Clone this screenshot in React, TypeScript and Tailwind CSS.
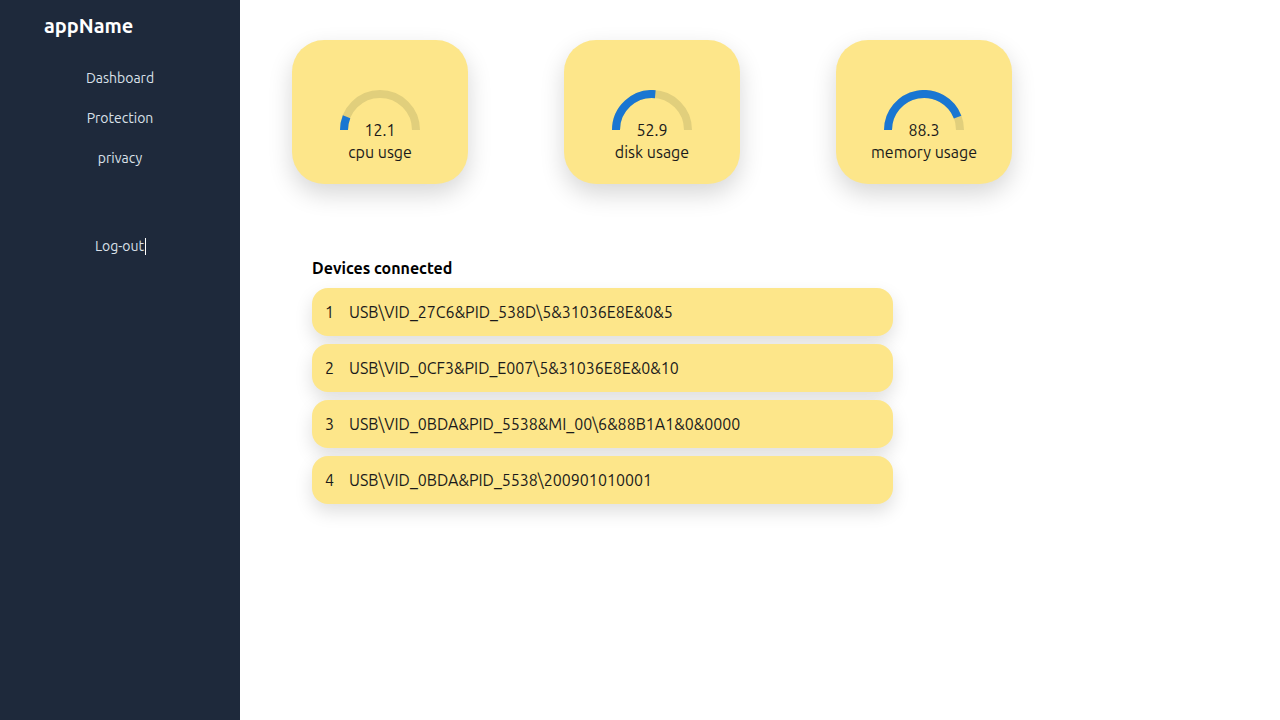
import React from "react";

type GaugeProps = { value: number; label: string };

function Gauge({ value, label }: GaugeProps) {
  const r = 36;
  const cx = 40;
  const cy = 40;
  const angle = Math.PI * (1 - value / 100);
  const ex = cx + r * Math.cos(angle);
  const ey = cy - r * Math.sin(angle);
  const track = `M ${cx - r} ${cy} A ${r} ${r} 0 0 1 ${cx + r} ${cy}`;
  const fill = `M ${cx - r} ${cy} A ${r} ${r} 0 0 1 ${ex.toFixed(3)} ${ey.toFixed(3)}`;
  return (
    <div className="flex h-[144px] w-[176px] flex-col items-center rounded-[32px] bg-[#fde68a] pt-[50px] shadow-[0_10px_24px_rgba(0,0,0,0.16)]">
      <div className="relative h-[40px] w-[80px]">
        <svg width="80" height="40" viewBox="0 0 80 40" className="block">
          <path d={track} fill="none" stroke="#e1cf7c" strokeWidth="8" />
          <path d={fill} fill="none" stroke="#1976d2" strokeWidth="8" />
        </svg>
      </div>
      <div className="-mt-[12px] text-base leading-6 text-[#1a1a1a]">{value}</div>
      <div className="-mt-[2px] text-base leading-6 text-[#1a1a1a]">{label}</div>
    </div>
  );
}

const devices = [
  "USB\\VID_27C6&PID_538D\\5&31036E8E&0&5",
  "USB\\VID_0CF3&PID_E007\\5&31036E8E&0&10",
  "USB\\VID_0BDA&PID_5538&MI_00\\6&88B1A1&0&0000",
  "USB\\VID_0BDA&PID_5538\\200901010001",
];

export default function App() {
  return (
    <div className="flex h-[720px] w-full font-['Ubuntu','Noto_Sans',sans-serif]">
      <aside className="flex h-full w-[240px] shrink-0 flex-col bg-[#1e293b]">
        <div className="pl-[44px] pt-[12px] text-[20px] font-bold leading-7 text-white">appName</div>
        <nav className="mt-[28px] flex flex-col items-center text-sm leading-5 text-[#dbe1ea]">
          <a className="block">Dashboard</a>
          <a className="mt-[20px] block">Protection</a>
          <a className="mt-[20px] block">privacy</a>
          <a className="ml-[1px] mt-[68px] flex items-center">
            Log-out
            <span className="ml-[1px] inline-block h-[17px] w-[1px] bg-white" />
          </a>
        </nav>
      </aside>
      <main className="flex-1 bg-white pl-[52px] pt-[40px]">
        <div className="flex gap-[96px]">
          <Gauge value={12.1} label="cpu usge" />
          <Gauge value={52.9} label="disk usage" />
          <Gauge value={88.3} label="memory usage" />
        </div>
        <section className="ml-[20px] mt-[72px] w-[581px]">
          <h2 className="text-base font-bold leading-6 text-black">Devices connected</h2>
          <ul className="mt-[8px] flex flex-col gap-[8px]">
            {devices.map((d, i) => (
              <li
                key={d}
                className="flex h-[48px] items-center rounded-[16px] bg-[#fde68a] pl-[13px] text-base text-[#1a1a1a] shadow-[0_8px_18px_rgba(0,0,0,0.13)]"
              >
                <span className="w-[24px]">{i + 1}</span>
                <span>{d}</span>
              </li>
            ))}
          </ul>
        </section>
      </main>
    </div>
  );
}
